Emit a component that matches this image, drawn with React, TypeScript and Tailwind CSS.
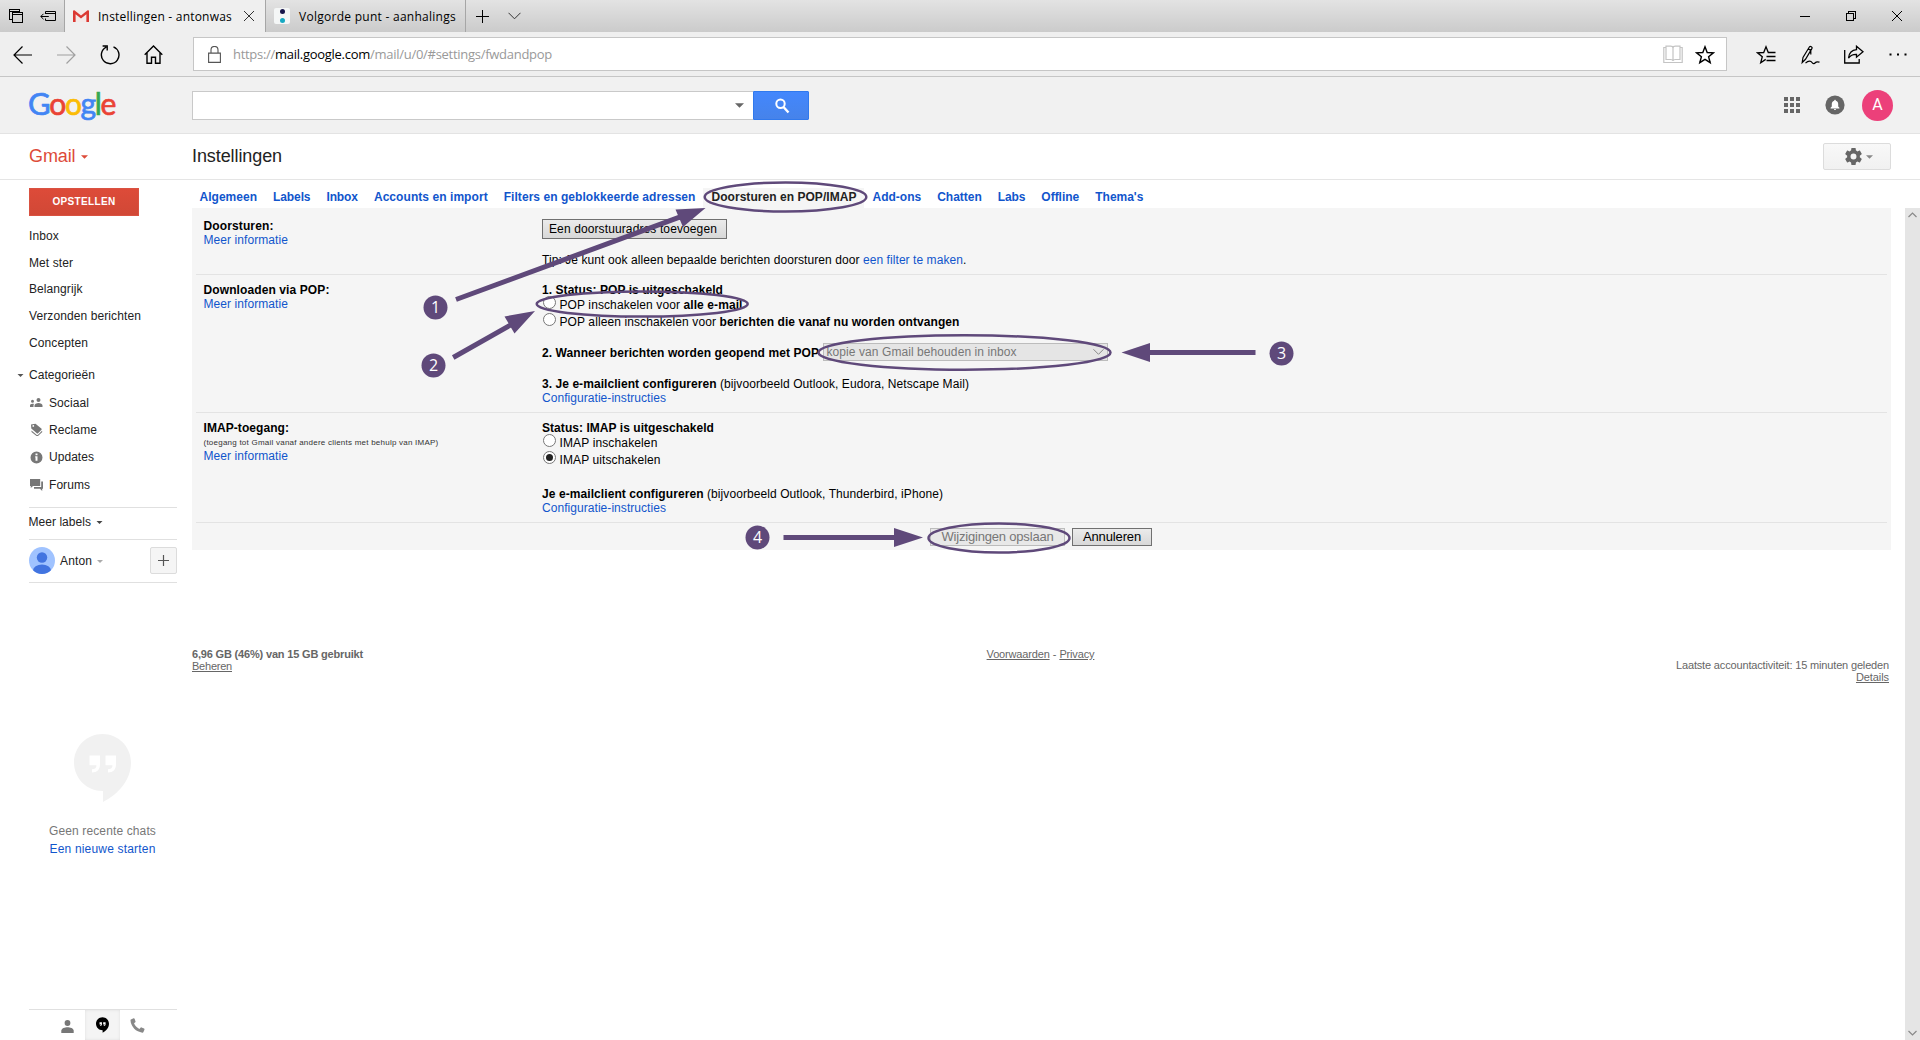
import { useLayoutEffect, useRef, type ReactNode } from "react";

/* Text run whose tracking is computed so that it fills a given width. */
function Fit({ w, className = "", children }: { w: number; className?: string; children: ReactNode }) {
  const ref = useRef<HTMLSpanElement>(null);
  useLayoutEffect(() => {
    const el = ref.current;
    if (!el) return;
    el.style.letterSpacing = "0px";
    const n = (el.textContent || "").length;
    const natural = el.getBoundingClientRect().width;
    el.style.letterSpacing = `${((w - natural) / n).toFixed(3)}px`;
  }, [w]);
  return (
    <span ref={ref} className={`inline-block shrink-0 whitespace-pre ${className}`}>
      {children}
    </span>
  );
}

function Caret({ className = "" }: { className?: string }) {
  return (
    <svg viewBox="0 0 8 4" className={`shrink-0 fill-current ${className}`}>
      <path d="M0 0h8L4 4z" />
    </svg>
  );
}

const ui = "font-['Open_Sans','Noto_Sans',sans-serif]";

function TitleBar() {
  return (
    <div className={`flex h-[32px] bg-linear-to-b from-[#e3e3e3] to-[#cbcbcb] text-[12px] text-black ${ui}`}>
      <div className="flex w-[65px] items-center border-r border-[#a6a6a6] pl-[8px]">
        <svg viewBox="0 0 16 16" className="size-[16px]" fill="none" stroke="#000" shapeRendering="crispEdges">
          <path d="M3.5 11.500H1.500V1.500H11.500V3.500M1 3h11M4.500 4.500h10v10h-10zM4 6.500h11M11.500 1.500v3" />
        </svg>
        <svg viewBox="0 0 17 12" className="ml-[16px] h-[12px] w-[17px]" fill="none" stroke="#000">
          <path d="M5.500 4V1.500h10v9h-10V8.500M5.500 3.500h10M.8 6.500h8M3.500 3.800.8 6.500l2.700 2.700" />
        </svg>
      </div>
      <div className="flex w-[200px] items-center bg-[#efefef] pl-[8px]">
        <svg viewBox="0 0 16 12" className="h-[12px] w-[16px]">
          <rect width="16" height="12" rx="1" fill="#f4e9e8" />
          <path d="M0 12V1.200C0 .3 1 0 1.700.5L8 5.600 14.300.5c.7-.5 1.700-.2 1.700.7V12h-2.600V4.300L8 8.500 2.600 4.300V12z" fill="#db3832" />
        </svg>
        <Fit w={134} className="mt-[1px] ml-[9px]">Instellingen - antonwas</Fit>
        <svg viewBox="0 0 12 12" className="ml-[11px] size-[12px]" stroke="#333" fill="none">
          <path d="M1 1l10 10M11 1L1 11" />
        </svg>
      </div>
      <div className="flex w-[201px] items-center border-x border-[#a6a6a6] pl-[8px]">
        <span className="flex size-[16px] flex-col items-center justify-between rounded-[2px] bg-[#f4f6f6] py-[1px]">
          <i className="size-[5px] rounded-full bg-[#17154a]" />
          <i className="size-[5px] rounded-full bg-[#16a9c2]" />
        </span>
        <Fit w={157} className="mt-[1px] ml-[9px]">Volgorde punt - aanhalings</Fit>
      </div>
      <div className="flex flex-1 items-center pl-[10px]">
        <svg viewBox="0 0 13 13" className="size-[13px]" stroke="#000" fill="none">
          <path d="M6.500 0v13M0 6.500h13" />
        </svg>
        <svg viewBox="0 0 13 8" className="ml-[19px] h-[8px] w-[13px]" stroke="#333" fill="none">
          <path d="M.5.800l6 6 6-6" />
        </svg>
      </div>
      <div className="flex items-center gap-[36px] pr-[18px]">
        <svg viewBox="0 0 10 10" className="size-[10px]" stroke="#000">
          <path d="M0 5.500h10" />
        </svg>
        <svg viewBox="0 0 10 10" className="size-[10px]" stroke="#000" fill="none" shapeRendering="crispEdges">
          <path d="M.5 2.500h7v7h-7zM2.500 2V.500h7v7H8" />
        </svg>
        <svg viewBox="0 0 10 10" className="size-[10px]" stroke="#000">
          <path d="M0 0l10 10M10 0L0 10" />
        </svg>
      </div>
    </div>
  );
}

function AddressBar() {
  return (
    <div className={`flex h-[45px] items-center border-b border-[#c6c6c6] bg-[#efefef] text-[13px] ${ui}`}>
      <div className="flex w-[193px] items-center pt-[1px] pl-[13px]">
        <svg viewBox="0 0 19 18" className="h-[18px] w-[19px]" fill="none" stroke="#000" strokeWidth="1.200">
          <path d="M9.500.500L1 9l8.500 8.500M1 9h18" />
        </svg>
        <svg viewBox="0 0 19 18" className="ml-[25px] h-[18px] w-[19px]" fill="none" stroke="#a0a0a0" strokeWidth="1.200">
          <path d="M9.500.500L18 9l-8.500 8.500M18 9H0" />
        </svg>
        <svg viewBox="0 0 20 20" className="ml-[24px] size-[20px]" fill="none" stroke="#000" strokeWidth="1.400">
          <path d="M13.500 1.800A8.800 8.800 0 1 1 6.200 2.100M2.600 1h4.600v4.600" />
        </svg>
        <svg viewBox="0 0 19 19" className="ml-[24px] size-[19px]" fill="none" stroke="#000" strokeWidth="1.400">
          <path d="M.7 9.800L9.500 1l8.800 8.800M3 8v10.200h4.500v-6h4v6H16V8" />
        </svg>
      </div>
      <div className="flex h-[34px] w-[1534px] items-center border border-[#c6c6c6] bg-white pl-[14px] text-[#999]">
        <svg viewBox="0 0 13 17" className="h-[17px] w-[13px]" fill="none" stroke="#555" strokeWidth="1.100">
          <path d="M.6 7.100h11.800v9.300H.6zM3 7V3.900a3.500 3.500 0 0 1 7 0V7" />
        </svg>
        <Fit w={42} className="mt-[1px] ml-[12px]">https://</Fit>
        <Fit w={95} className="mt-[1px] text-black">mail.google.com</Fit>
        <Fit w={182} className="mt-[1px]">/mail/u/0/#settings/fwdandpop</Fit>
        <svg viewBox="0 0 20 19" className="mt-[1px] ml-auto h-[19px] w-[20px]" fill="none" stroke="#c4c4c4" strokeWidth="1.200">
          <path d="M3 1.200h4.500c1.500 0 2.500.8 2.500 1.800v13c0-.8-1-1.500-2.500-1.500H3zM17 1.200h-4.500C11 1.200 10 2 10 3v13c0-.8 1-1.500 2.500-1.500H17zM3 2.500H.8v15H19.200v-15H17" />
        </svg>
        <svg viewBox="0 0 20 20" className="mt-[1px] mr-[11px] ml-[12px] size-[20px]" fill="none" stroke="#000" strokeWidth="1.400">
          <path d="M10 1.800l2.200 5.700 6.200.3-4.800 3.900 1.600 6-5.200-3.400-5.200 3.400 1.600-6L1.600 7.800l6.200-.3z" />
        </svg>
      </div>
      <div className="flex flex-1 items-center pt-[1px] pl-[29px]">
        <svg viewBox="0 0 20 20" className="size-[20px]" fill="none" stroke="#000" strokeWidth="1.300">
          <path d="M19.500 7.500h-7.200L10 1.800 7.700 7.500l-6.200.3 4.800 3.900-1.600 6 5-3.300M10.500 11.500h9M10.500 15.500h9" />
        </svg>
        <svg viewBox="0 0 19 20" className="ml-[25px] h-[20px] w-[19px]" fill="none" stroke="#000" strokeWidth="1.200">
          <path d="M1.200 17.500l.8-5L8.500 1.800c.8-1 3.200.3 2.500 1.600L4.500 14.300zM7.200 3.800l2.600 1.600v4M4.500 18.200c3-3 5.500-2.500 6.500-.7s2.500 1.200 3.500 0 2.500-.7 4-.3" />
        </svg>
        <svg viewBox="0 0 20 19" className="ml-[24px] h-[19px] w-[20px]" fill="none" stroke="#000" strokeWidth="1.300">
          <path d="M.7 5v13h14.500v-4M12.500 1.200l6.500 5.500-6.500 5.500V9.300c-3.500-.1-6 .9-8 3.700.6-5 3.500-8 8-8.300z" />
        </svg>
        <svg viewBox="0 0 18 3" className="ml-[25px] h-[3px] w-[18px]">
          <path d="M.5.500h2v2h-2zM8 .500h2v2H8zM15.500.500h2v2h-2z" />
        </svg>
      </div>
    </div>
  );
}

function GoogleHeader() {
  return (
    <div className="flex h-[57px] items-center border-b border-[#e3e3e3] bg-[#f1f1f1]">
      <div className="flex w-[192px] pl-[28px] font-['Lato',sans-serif] text-[30px] leading-[40px]">
        <Fit w={87} className="-mt-[4px]">
          <span className="text-[31px] text-[#4285f4] [-webkit-text-stroke:0.700px_#4285f4]">G</span>
          <span className="text-[#ea4335] [-webkit-text-stroke:0.700px_#ea4335]">o</span>
          <span className="text-[#fbbc05] [-webkit-text-stroke:0.700px_#fbbc05]">o</span>
          <span className="text-[#4285f4] [-webkit-text-stroke:0.700px_#4285f4]">g</span>
          <span className="text-[#34a853] [-webkit-text-stroke:0.700px_#34a853]">l</span>
          <span className="text-[#ea4335] [-webkit-text-stroke:0.700px_#ea4335]">e</span>
        </Fit>
      </div>
      <div className="flex h-[29px] w-[561px] items-center justify-end border border-r-0 border-[#c9c9c9] bg-white pr-[9px]">
        <Caret className="h-[5px] w-[9px] text-[#666]" />
      </div>
      <div className="flex h-[29px] w-[56px] items-center justify-center rounded-r-[1px] border border-[#3079ed] bg-linear-to-b from-[#4387fd] to-[#4683ea]">
        <svg viewBox="0 0 16 16" className="mt-[1px] ml-[1px] size-[16px]" fill="none" stroke="#fff">
          <circle cx="6.500" cy="5.800" r="4.200" strokeWidth="2" />
          <path d="M9.500 9l5 5.500" strokeWidth="2.400" />
        </svg>
      </div>
      <div className="ml-auto flex items-center pr-[27px]">
        <div className="grid grid-cols-3 gap-[2px]">
          {Array.from({ length: 9 }, (_, i) => (
            <i key={i} className="size-[4px] bg-[#666]" />
          ))}
        </div>
        <svg viewBox="0 0 20 20" className="ml-[25px] size-[20px]">
          <circle cx="10" cy="10" r="9.600" fill="#666" />
          <path d="M10 4.800c.6 0 .8.400.8.900 1.700.4 2.400 1.700 2.400 3.300v2.400l1.200 1.400v.6H5.600v-.6l1.200-1.400V9c0-1.600.7-2.900 2.400-3.300 0-.5.2-.9.800-.9zM9 14h2c0 1.300-2 1.300-2 0z" fill="#fff" />
        </svg>
        <span className="ml-[17px] flex size-[31px] items-center justify-center rounded-full bg-[#ec407a] font-['Roboto',sans-serif] text-[16px] text-white">
          A
        </span>
      </div>
    </div>
  );
}

function PageTitle() {
  return (
    <div className="flex h-[46px] items-center border-b border-[#e5e5e5]">
      <div className="flex w-[192px] items-center pl-[29px] text-[18px] text-[#dd4b39]">
        <Fit w={46.500}>Gmail</Fit>
        <Caret className="mt-[1px] ml-[5px] h-[4px] w-[7px]" />
      </div>
      <Fit w={90} className="text-[18px] text-[#222]">Instellingen</Fit>
      <div className="mr-[29px] ml-auto flex h-[27px] w-[68px] items-center justify-center rounded-[2px] border border-[#dcdcdc] bg-linear-to-b from-[#f8f8f8] to-[#f1f1f1] pl-[3px] text-[#888]">
        <svg viewBox="2 2 20 20" className="size-[17px]" fill="#666">
          <path d="M19.430 12.980c.04-.32.07-.64.07-.98s-.03-.66-.07-.98l2.110-1.650c.19-.15.24-.42.120-.64l-2-3.460c-.12-.22-.39-.3-.61-.22l-2.490 1c-.52-.4-1.080-.73-1.690-.98l-.38-2.650C14.460 2.180 14.250 2 14 2h-4c-.25 0-.46.180-.49.420l-.38 2.650c-.61.250-1.170.590-1.690.980l-2.490-1c-.23-.09-.49 0-.61.220l-2 3.460c-.13.220-.07.490.120.640l2.110 1.650c-.04.320-.07.650-.07.980s.03.660.07.980l-2.110 1.650c-.19.150-.24.420-.12.640l2 3.460c.12.220.39.300.61.220l2.490-1c.52.400 1.080.730 1.690.980l.38 2.650c.03.240.24.420.49.420h4c.25 0 .46-.18.490-.42l.38-2.650c.61-.25 1.170-.59 1.690-.98l2.490 1c.23.090.49 0 .61-.22l2-3.460c.12-.22.070-.49-.12-.64zM12 15.500a3.500 3.500 0 1 1 0-7 3.500 3.500 0 0 1 0 7z" />
        </svg>
        <Caret className="ml-[4px] h-[4px] w-[7px]" />
      </div>
    </div>
  );
}

const folders = [
  { label: "Inbox", w: 30 },
  { label: "Met ster", w: 44 },
  { label: "Belangrijk", w: 53.500 },
  { label: "Verzonden berichten", w: 112 },
  { label: "Concepten", w: 59 },
];

const categories = [
  {
    label: "Sociaal",
    w: 40,
    icon: (
      <path d="M8.500 6a2 2 0 1 0 0-4 2 2 0 0 0 0 4zM2.500 6.800a1.500 1.500 0 1 0 0-3 1.500 1.500 0 0 0 0 3zM8.500 7C6.500 7 4.500 8 4.500 9.500V11h8V9.500C12.500 8 10.500 7 8.500 7zM2.500 7.800C1 7.800 0 8.600 0 9.500V11h3.500V9.500c0-.6.2-1.100.5-1.500-.4-.1-.9-.2-1.500-.2z" />
    ),
  },
  {
    label: "Reclame",
    w: 48,
    icon: (
      <path d="M1 1.500L5.500.8l5.800 4.700c.4.400.5.800.2 1.200L8 10.200c-.4.300-.9.300-1.200 0L1.300 5.500zM3.300 3.800a.9.9 0 1 0 0-1.800.9.900 0 0 0 0 1.800zM1.500 7.500l5 4.300c.5.400 1 .4 1.500 0l4-4 .3 1.300L8 13c-.5.400-1 .4-1.500 0l-5-4z" fillRule="evenodd" />
    ),
  },
  {
    label: "Updates",
    w: 45,
    icon: <path d="M6.500.500a6 6 0 1 0 0 12 6 6 0 0 0 0-12zM5.500 2.500h2v1.800h-2zM5.200 5.300h2.300v4.500h-2V6.500h-.3z" fillRule="evenodd" />,
  },
  {
    label: "Forums",
    w: 41,
    icon: <path d="M0 1h10.200v7H3L.8 10V8H0zM11.200 3.500H13v7.300h-.8V13L10 10.800H4V9h7.200z" />,
  },
];

function HangoutsMark({ className, quote }: { className: string; quote: string }) {
  return (
    <svg viewBox="0 0 57 68" className={className}>
      <path d="M28.500 0C12.800 0 0 12.700 0 28.500S12.800 57 28.500 57h.5v11C43 61 57 47 57 28.500 57 12.700 44.200 0 28.500 0z" fill="currentColor" />
      <path d="M15.500 21.500h10.500v9c0 5-3 8-8 8v-3.200c3 0 4.500-1.500 4.500-4h-7zM31.500 21.500H42v9c0 5-3 8-8 8v-3.200c3 0 4.500-1.500 4.500-4h-7z" fill={quote} />
    </svg>
  );
}

function Sidebar() {
  return (
    <aside className="flex h-[860px] w-[192px] flex-col text-[12px] leading-[14px] text-[#222]">
      <div className="mt-[8px] ml-[29px] flex h-[28px] w-[110px] items-center justify-center border border-[#d95241] bg-linear-to-b from-[#dd4b39] to-[#d14836] text-[10px] font-bold text-white">
        <Fit w={63}>OPSTELLEN</Fit>
      </div>
      <nav className="mt-[7px] ml-[29px]">
        {folders.map((f) => (
          <div key={f.label} className="flex h-[26.600px] items-center">
            <Fit w={f.w}>{f.label}</Fit>
          </div>
        ))}
      </nav>
      <div className="mt-[5px] ml-[17px] flex h-[28px] items-center">
        <Caret className="mt-[1px] h-[3px] w-[7px] text-[#555]" />
        <Fit w={66} className="ml-[5px]">Categorieën</Fit>
      </div>
      <div className="ml-[30px]">
        {categories.map((c) => (
          <div key={c.label} className="flex h-[27.300px] items-center">
            <svg viewBox="0 0 13 13" className="size-[13px] fill-[#777]">{c.icon}</svg>
            <Fit w={c.w} className="ml-[6px]">{c.label}</Fit>
          </div>
        ))}
      </div>
      <div className="mt-[8.800px] ml-[29px] flex h-[32px] w-[148px] items-center border-t border-[#e0e0e0] pb-[2px]">
        <Fit w={62.500} className="-ml-[0.500px]">Meer labels</Fit>
        <Caret className="mt-[1px] ml-[5px] h-[3px] w-[7px] text-[#444]" />
      </div>
      <div className="ml-[29px] flex h-[44px] w-[148px] items-center border-y border-[#e0e0e0]">
        <svg viewBox="0 0 26 27" className="h-[27px] w-[26px]">
          <clipPath id="avatar"><ellipse cx="13" cy="13.500" rx="13" ry="13.500" /></clipPath>
          <g clipPath="url(#avatar)">
            <rect width="26" height="27" fill="#a0c3ff" />
            <circle cx="13" cy="10.500" r="5.200" fill="#4274e0" />
            <ellipse cx="13" cy="23.500" rx="9" ry="6" fill="#4274e0" />
          </g>
        </svg>
        <Fit w={32} className="ml-[5px]">Anton</Fit>
        <Caret className="mt-[1px] ml-[5px] h-[3px] w-[6px] text-[#aaa]" />
        <span className="ml-auto flex size-[27px] items-center justify-center rounded-[2px] border border-[#dcdcdc] bg-[#f5f5f5]">
          <svg viewBox="0 0 11 11" className="size-[11px]" stroke="#555" strokeWidth="1.200">
            <path d="M5.500 0v11M0 5.500h11" />
          </svg>
        </span>
      </div>
      <div className="mt-[151px] ml-[29px] flex w-[147px] flex-col items-center">
        <HangoutsMark className="h-[68px] w-[57px] text-[#f1f1f1]" quote="#fff" />
        <div className="mt-[20px] flex h-[18px] items-center text-[#777]">
          <Fit w={107}>Geen recente chats</Fit>
        </div>
        <div className="flex h-[18px] items-center text-[#15c]">
          <Fit w={106}>Een nieuwe starten</Fit>
        </div>
      </div>
      <div className="mt-auto ml-[29px] flex h-[31px] w-[148px] border-t border-[#e0e0e0] pl-[21px] text-[#777]">
        <span className="flex w-[35px] items-center justify-center pt-[2px]">
          <svg viewBox="0 0 13 13" className="size-[13px] fill-current">
            <circle cx="6.500" cy="3" r="2.900" />
            <path d="M.3 13v-2.300C.3 8.300 4 7.200 6.500 7.200s6.200 1.100 6.200 3.500V13z" />
          </svg>
        </span>
        <span className="flex w-[35px] items-center justify-center bg-[#f4f4f4] text-black shadow-[inset_0_0_3px_#ddd]">
          <HangoutsMark className="h-[16px] w-[13px]" quote="#fff" />
        </span>
        <span className="flex w-[35px] items-center justify-center">
          <svg viewBox="0 0 16 16" className="size-[15px] fill-[#888]">
            <path d="M1 1.500L3.800.3c.5-.2.900 0 1.100.5l1 2.800c.1.400 0 .8-.3 1L4.300 5.700c1 2.600 3 4.700 5.700 6l1.300-1.400c.3-.3.600-.4 1-.2l2.700 1.200c.5.200.6.600.4 1.100l-1.200 2.700c-.2.400-.5.600-1 .5C6.500 15 1 9.500.5 2.500c0-.5.1-.8.500-1z" />
          </svg>
        </span>
      </div>
    </aside>
  );
}

const tabs = [
  { label: "Algemeen", w: 57.600 },
  { label: "Labels", w: 37.300 },
  { label: "Inbox", w: 31.500 },
  { label: "Accounts en import", w: 113.800 },
  { label: "Filters en geblokkeerde adressen", w: 191.800 },
  { label: "Doorsturen en POP/IMAP", w: 145, active: true },
  { label: "Add-ons", w: 48.700 },
  { label: "Chatten", w: 44.600 },
  { label: "Labs", w: 27.500 },
  { label: "Offline", w: 38 },
  { label: "Thema's", w: 48 },
];

const line = "flex h-[14px] items-center";

function Radio({ checked = false }: { checked?: boolean }) {
  return (
    <span className="mb-[6px] ml-[1px] flex size-[13px] shrink-0 items-center justify-center rounded-full border border-[#777] bg-white">
      {checked && <i className="size-[7px] rounded-full bg-[#222]" />}
    </span>
  );
}

function Link({ w, children }: { w: number; children: string }) {
  return <Fit w={w} className="text-[#15c]">{children}</Fit>;
}

function Settings() {
  return (
    <div className="mr-[14px] flex h-[342px] flex-col bg-[#f5f5f5] px-[4px] text-[12px] leading-[14px] text-black">
      <section className="flex h-[67px] border-b border-[#e3e3e3] pt-[11px] pl-[7.500px]">
        <div className="w-[338.500px]">
          <div className={line}><Fit w={70} className="font-bold">Doorsturen:</Fit></div>
          <div className={line}><Link w={84.500}>Meer informatie</Link></div>
        </div>
        <div>
          <button className="flex h-[20px] w-[185px] items-center border border-[#707070] bg-linear-to-b from-[#ebebeb] to-[#d8d8d8] pl-[6px]">
            <Fit w={168}>Een doorstuuradres toevoegen</Fit>
          </button>
          <div className={`mt-[14px] ${line}`}>
            <Fit w={321}>Tip: Je kunt ook alleen bepaalde berichten doorsturen door </Fit>
            <Link w={100}>een filter te maken</Link>.
          </div>
        </div>
      </section>

      <section className="flex h-[138px] border-b border-[#e3e3e3] pt-[8px] pl-[7.500px]">
        <div className="w-[338.500px]">
          <div className={line}><Fit w={126} className="font-bold">Downloaden via POP:</Fit></div>
          <div className={line}><Link w={84.500}>Meer informatie</Link></div>
        </div>
        <div>
          <div className={line}><Fit w={181} className="font-bold">1. Status: POP is uitgeschakeld</Fit></div>
          <div className="flex h-[16px] items-center">
            <Radio />
            <Fit w={124} className="ml-[3.500px]">POP inschakelen voor </Fit>
            <Fit w={59} className="font-bold">alle e-mail</Fit>
          </div>
          <div className="flex h-[18px] items-center">
            <Radio />
            <Fit w={160} className="ml-[3.500px]">POP alleen inschakelen voor </Fit>
            <Fit w={240} className="font-bold">berichten die vanaf nu worden ontvangen</Fit>
          </div>
          <div className="mt-[12px] flex h-[18px] items-center">
            <Fit w={277} className="pt-[2px] font-bold">2. Wanneer berichten worden geopend met POP</Fit>
            <div className="ml-[4px] flex h-[18px] w-[285px] items-center border border-[#bcbcbc] bg-[#e5e5e5] pl-[2.500px] text-[#777]">
              <Fit w={190}>kopie van Gmail behouden in inbox</Fit>
              <svg viewBox="0 0 11 6" className="mr-[3px] ml-auto h-[6px] w-[11px]" fill="none" stroke="#888">
                <path d="M.5.300l5 5 5-5" />
              </svg>
            </div>
          </div>
          <div className={`mt-[16px] ${line}`}>
            <Fit w={178} className="font-bold">3. Je e-mailclient configureren </Fit>
            <Fit w={249}>(bijvoorbeeld Outlook, Eudora, Netscape Mail)</Fit>
          </div>
          <div className={line}><Link w={124}>Configuratie-instructies</Link></div>
        </div>
      </section>

      <section className="flex h-[110px] border-b border-[#e3e3e3] pt-[8px] pl-[7.500px]">
        <div className="w-[338.500px]">
          <div className={line}><Fit w={85.500} className="font-bold">IMAP-toegang:</Fit></div>
          <div className={`${line} pt-[2px] text-[8px] text-[#333]`}>
            <Fit w={235}>(toegang tot Gmail vanaf andere clients met behulp van IMAP)</Fit>
          </div>
          <div className={line}><Link w={84.500}>Meer informatie</Link></div>
        </div>
        <div>
          <div className={line}><Fit w={172} className="font-bold">Status: IMAP is uitgeschakeld</Fit></div>
          <div className="flex h-[16px] items-center">
            <Radio />
            <Fit w={98} className="ml-[3.500px]">IMAP inschakelen</Fit>
          </div>
          <div className="flex h-[18px] items-center">
            <Radio checked />
            <Fit w={101} className="ml-[3.500px]">IMAP uitschakelen</Fit>
          </div>
          <div className={`mt-[18px] ${line}`}>
            <Fit w={165} className="font-bold">Je e-mailclient configureren </Fit>
            <Fit w={236}>(bijvoorbeeld Outlook, Thunderbird, iPhone)</Fit>
          </div>
          <div className={line}><Link w={124}>Configuratie-instructies</Link></div>
        </div>
      </section>

      <section className="flex pt-[5px] pl-[734px] text-[13px]">
        <button className="flex h-[18px] w-[135px] items-center justify-center border border-[#bcbcbc] bg-[#e8e8e8] text-[#777]">
          <Fit w={112}>Wijzigingen opslaan</Fit>
        </button>
        <button className="ml-[7px] flex h-[18px] w-[80px] items-center justify-center border border-[#707070] bg-linear-to-b from-[#ebebeb] to-[#d8d8d8]">
          <Fit w={58}>Annuleren</Fit>
        </button>
      </section>
    </div>
  );
}

function Footer() {
  return (
    <footer className="mt-[98px] mr-[16px] grid grid-cols-3 text-[11px] leading-[12px] text-[#666]">
      <div>
        <div><Fit w={171} className="font-bold">6,96 GB (46%) van 15 GB gebruikt</Fit></div>
        <div><Fit w={40} className="underline">Beheren</Fit></div>
      </div>
      <div className="text-center">
        <Fit w={63} className="underline">Voorwaarden</Fit> - <Fit w={35} className="underline">Privacy</Fit>
      </div>
      <div className="flex flex-col items-end pt-[11px]">
        <Fit w={213}>Laatste accountactiviteit: 15 minuten geleden</Fit>
        <Fit w={33} className="underline">Details</Fit>
      </div>
    </footer>
  );
}

const badges = [
  { n: 1, x: 435.500, y: 307.500 },
  { n: 2, x: 433.500, y: 365.500 },
  { n: 3, x: 1281.500, y: 353.500 },
  { n: 4, x: 757.500, y: 537.500 },
];

/* Numbered callouts drawn over the settings page. */
function Annotations() {
  return (
    <svg viewBox="0 0 1920 1040" className="pointer-events-none absolute inset-0 h-[1040px] w-[1920px]">
      <g fill="none" stroke="#5f497a" strokeWidth="2.500">
        <ellipse cx="785.500" cy="197" rx="80.800" ry="14.500" />
        <ellipse cx="642.200" cy="304" rx="105.500" ry="12.600" />
        <ellipse cx="964.500" cy="352.500" rx="146" ry="17.200" />
        <ellipse cx="999" cy="538" rx="70.500" ry="14.500" />
      </g>
      <g stroke="#5f497a" strokeWidth="5">
        <path d="M456 299.500L685 215.200M453.200 357.500L515 322.500M1255.500 352.500H1145M783.500 537.500H896" />
      </g>
      <g fill="#5f497a">
        <path d="M705.500 208L675.500 209.500 683 227zM535 311L504.500 316.500 514.500 333.500zM1121.500 352.500L1150 343V362zM923 537.500L894 528V547z" />
      </g>
      {badges.map((b) => (
        <g key={b.n}>
          <circle cx={b.x} cy={b.y} r="12" fill="#5f497a" />
          <text x={b.x} y={b.y + 5.500} textAnchor="middle" fill="#fff" className="font-['Open_Sans',sans-serif] text-[16px]">
            {b.n}
          </text>
        </g>
      ))}
    </svg>
  );
}

export default function App() {
  return (
    <div className="relative flex h-[1040px] w-[1920px] flex-col overflow-hidden bg-white font-['Liberation_Sans',Arial,sans-serif]">
      <TitleBar />
      <AddressBar />
      <GoogleHeader />
      <PageTitle />
      <div className="flex">
        <Sidebar />
        <div className="flex flex-1 flex-col">
          <div className="-ml-[0.500px] flex h-[28px] pt-[8px] text-[12px] leading-[19px] font-bold text-[#15c]">
            {tabs.map((t) => (
              <span key={t.label} className={t.active ? "bg-[#f5f5f5] px-[8px] text-[#222]" : "px-[8px]"}>
                <Fit w={t.w}>{t.label}</Fit>
              </span>
            ))}
          </div>
          <div className="flex flex-1">
            <main className="flex-1">
              <Settings />
              <Footer />
            </main>
            <div className="flex w-[15px] flex-col items-center justify-between bg-[#e5e5e5] py-[4px]">
              <svg viewBox="0 0 9 6" className="h-[6px] w-[9px]" fill="none" stroke="#888" strokeWidth="1.200">
                <path d="M.5 5l4-4 4 4" />
              </svg>
              <svg viewBox="0 0 9 6" className="h-[6px] w-[9px]" fill="none" stroke="#888" strokeWidth="1.200">
                <path d="M.5 1l4 4 4-4" />
              </svg>
            </div>
          </div>
        </div>
      </div>
      <Annotations />
    </div>
  );
}
